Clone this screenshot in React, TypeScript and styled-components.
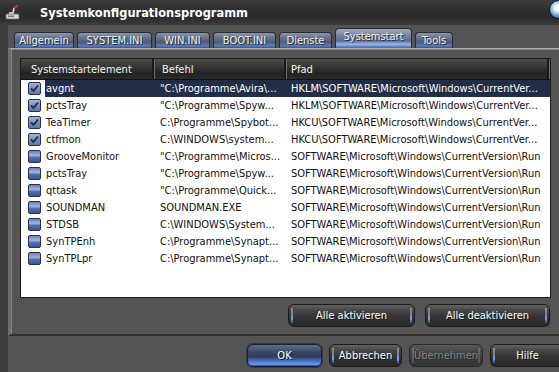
import React from "react";
import styled, { createGlobalStyle, css } from "styled-components";

const FONT = `"DejaVu Sans Condensed", "Liberation Sans", Arial, sans-serif`;

const Global = createGlobalStyle`
  html, body { margin: 0; padding: 0; background: #545454; }
  body { font-family: ${FONT}; }
`;

const Window = styled.div`
  width: 559px;
  height: 372px;
  overflow: hidden;
  background: #545454;
  display: flex;
  flex-direction: column;
  font-size: 11px;
`;

const TitleBar = styled.div`
  height: 25px;
  flex: none;
  display: flex;
  align-items: center;
  padding-left: 5px;
  background: linear-gradient(#3e3e3e, #303030 35%, #2b2b2b 70%, #3c3c3c);
`;

const TitleText = styled.div`
  flex: 1;
  margin-left: 19px;
  color: #ffffff;
  font-weight: bold;
  font-size: 12.7px;
`;

const Orb = styled.div`
  flex: none;
  width: 17px;
  height: 17px;
  margin-right: -9px;
  margin-top: -7px;
  border-radius: 50%;
  border: 1px solid #1c1c1c;
  background: radial-gradient(circle at 45% 40%, #ffffff 0 18%, #a8c8ee 40%, #4a6fa8 72%, #1d2a40);
`;

const Body = styled.div`
  flex: 1;
  display: flex;
  flex-direction: column;
  border-left: 8px solid #3c3c3c;
`;

const TabStrip = styled.div`
  height: 23px;
  flex: none;
  display: flex;
  align-items: flex-end;
  gap: 3px;
  padding-left: 6px;
`;

const Tab = styled.div<{ $active?: boolean; $w: number }>`
  width: ${(p) => p.$w}px;
  height: 16px;
  box-sizing: border-box;
  border: 1px solid #262b36;
  border-bottom: none;
  border-radius: 4px 4px 0 0;
  display: flex;
  align-items: center;
  justify-content: center;
  color: #eef0f4;
  font-size: 11px;
  text-shadow: 1px 1px 0 #2a3040;
  background: linear-gradient(#8e97a8, #69758f 30%, #4f5c7a 62%, #5a7cc0 86%, #3c5283);
  ${(p) =>
    p.$active &&
    css`
      height: 20px;
      align-items: flex-start;
      padding-top: 1px;
      background: linear-gradient(#a3abba, #77819a 35%, #5c6a8e 62%, #93b8f6 80%, #4d6597);
    `}
`;

const Panel = styled.div`
  width: 560px;
  height: 288px;
  flex: none;
  box-sizing: border-box;
  border-top: 1px solid #a9a9a9;
  border-left: 3px solid #6f6f6f;
  border-bottom: 2px solid #2f2f2f;
  box-shadow: inset 1px 1px 0 #858585;
  padding: 9px 0 0 9px;
  display: flex;
  flex-direction: column;
`;

const ListBox = styled.div`
  width: 531px;
  height: 240px;
  box-sizing: border-box;
  border: 1px solid #1b1b1b;
  background: #ffffff;
  display: flex;
  flex-direction: column;
  overflow: hidden;
`;

const Header = styled.div`
  height: 21px;
  flex: none;
  display: grid;
  grid-template-columns: 134px 132px 1fr;
  background: linear-gradient(#4c4c4c, #353535 40%, #222222 75%, #2c2c2c);
  border-bottom: 1px solid #111;
  box-sizing: border-box;
`;

const HeadCell = styled.div<{ $pad: number }>`
  display: flex;
  align-items: center;
  padding-left: ${(p) => p.$pad}px;
  color: #f4f4f4;
  font-size: 11px;
  border-right: 1px solid #6a6a6a;
  box-shadow: inset -2px 0 0 #1a1a1a;
`;

const Row = styled.div`
  height: 17px;
  flex: none;
  display: grid;
  grid-template-columns: 24px 110px 132px 1fr;
  align-items: stretch;
`;

const CheckCell = styled.div`
  display: flex;
  align-items: center;
  padding-left: 7px;
`;

const Cell = styled.div<{ $sel?: boolean; $pad: number }>`
  display: flex;
  align-items: center;
  padding-left: ${(p) => p.$pad}px;
  white-space: nowrap;
  overflow: hidden;
  color: ${(p) => (p.$sel ? "#ffffff" : "#101010")};
  background: ${(p) => (p.$sel ? "#222d46" : "transparent")};
  font-size: 11px;
`;

const Check = styled.span<{ $on: boolean }>`
  width: 13px;
  height: 13px;
  box-sizing: border-box;
  border: 1px solid #26324e;
  border-radius: 2px;
  display: flex;
  align-items: center;
  justify-content: center;
  background: ${(p) =>
    p.$on
      ? "linear-gradient(#a6b4d2, #7d8fb8 50%, #64789f)"
      : "linear-gradient(#6d82b4, #9fb4e2 40%, #5470ac 58%, #3d5690)"};
`;

const ButtonRow = styled.div`
  width: 531px;
  display: flex;
  justify-content: flex-end;
  gap: 10px;
  margin-top: 6px;
  padding-right: 1px;
  box-sizing: border-box;
`;

const sideGlow = "linear-gradient(#8e8e8e, #7a7f88 40%, #6fa2ff 72%, #3c4a66)";

const Button = styled.button<{ $w: number; $default?: boolean; $disabled?: boolean }>`
  width: ${(p) => p.$w}px;
  height: 23px;
  flex: none;
  box-sizing: border-box;
  border: 1px solid #1b1b1b;
  border-radius: 6px;
  padding: 0;
  font-family: ${FONT};
  font-size: 11px;
  color: #ffffff;
  text-shadow: 1px 1px 0 #1a1a1a;
  white-space: nowrap;
  background:
    ${sideGlow} left 2px top 3px / 2px calc(100% - 6px) no-repeat,
    ${sideGlow} right 2px top 3px / 2px calc(100% - 6px) no-repeat,
    linear-gradient(#626262, #474747 25%, #353535 55%, #2a2a2a);
  ${(p) =>
    p.$default &&
    css`
      border-color: #18203a;
      background: linear-gradient(#5f6d8a, #3a4868 35%, #2d3b5c 55%, #4f7fd8 82%, #6d9cf0 92%, #2e4068);
      box-shadow: 0 0 0 1px #3a3a3a;
    `}
  ${(p) =>
    p.$disabled &&
    css`
      color: #858585;
      text-shadow: 1px 1px 0 #2a2a2a;
      background:
        linear-gradient(#6a6a6a, #555) left 2px top 3px / 2px calc(100% - 6px) no-repeat,
        linear-gradient(#6a6a6a, #555) right 2px top 3px / 2px calc(100% - 6px) no-repeat,
        linear-gradient(#5a5a5a, #474747 30%, #3c3c3c 60%, #343434);
      border-color: #2a2a2a;
    `}
`;

const Footer = styled.div`
  flex: 1;
  display: flex;
  align-items: flex-start;
  gap: 7px;
  padding: 8px 0 0 239px;
`;

const AppIcon = () => (
  <svg width="16" height="16" viewBox="0 0 16 16">
    <rect x="1" y="9" width="13" height="5" rx="1" fill="#d8d8d8" stroke="#6a6a6a" strokeWidth="0.8" />
    <rect x="3" y="10.5" width="6" height="1.5" fill="#777" />
    <path d="M8 9 L9 3" stroke="#e6e6e6" strokeWidth="1.6" />
    <path d="M9 3 L13 0.5" stroke="#d03040" strokeWidth="2" />
    <rect x="4" y="7" width="5" height="2" fill="#bdbdbd" />
  </svg>
);

const CheckMark = () => (
  <svg width="9" height="9" viewBox="0 0 9 9">
    <path d="M1 4.5 L3.5 7 L8 1.5" fill="none" stroke="#1c2a52" strokeWidth="1.8" />
  </svg>
);

type RowData = [boolean, string, string, string];

const HK = "\\SOFTWARE\\Microsoft\\Windows\\CurrentVer...";
const RUN = "SOFTWARE\\Microsoft\\Windows\\CurrentVersion\\Run";

const rows: RowData[] = [
  [true, "avgnt", "\"C:\\Programme\\Avira\\...", "HKLM" + HK],
  [true, "pctsTray", "\"C:\\Programme\\Spyw...", "HKLM" + HK],
  [true, "TeaTimer", "C:\\Programme\\Spybot...", "HKCU" + HK],
  [true, "ctfmon", "C:\\WINDOWS\\system...", "HKCU" + HK],
  [false, "GrooveMonitor", "\"C:\\Programme\\Micros...", RUN],
  [false, "pctsTray", "\"C:\\Programme\\Spyw...", RUN],
  [false, "qttask", "\"C:\\Programme\\Quick...", RUN],
  [false, "SOUNDMAN", "SOUNDMAN.EXE", RUN],
  [false, "STDSB", "C:\\WINDOWS\\System...", RUN],
  [false, "SynTPEnh", "C:\\Programme\\Synapt...", RUN],
  [false, "SynTPLpr", "C:\\Programme\\Synapt...", RUN],
];

const tabs: [string, number][] = [
  ["Allgemein", 60],
  ["SYSTEM.INI", 75],
  ["WIN.INI", 55],
  ["BOOT.INI", 63],
  ["Dienste", 53],
  ["Systemstart", 77],
  ["Tools", 38],
];

export default function App() {
  return (
    <>
      <Global />
      <Window>
        <TitleBar>
          <AppIcon />
          <TitleText>Systemkonfigurationsprogramm</TitleText>
          <Orb />
        </TitleBar>
        <Body>
          <TabStrip>
            {tabs.map(([t, w]) => (
              <Tab key={t} $w={w} $active={t === "Systemstart"}>
                {t}
              </Tab>
            ))}
          </TabStrip>
          <Panel>
            <ListBox>
              <Header>
                <HeadCell $pad={10}>Systemstartelement</HeadCell>
                <HeadCell $pad={7}>Befehl</HeadCell>
                <HeadCell $pad={4}>Pfad</HeadCell>
              </Header>
              {rows.map(([on, name, cmd, path], i) => (
                <Row key={i}>
                  <CheckCell>
                    <Check $on={on}>{on && <CheckMark />}</Check>
                  </CheckCell>
                  <Cell $pad={1} $sel={i === 0}>{name}</Cell>
                  <Cell $pad={5} $sel={i === 0}>{cmd}</Cell>
                  <Cell $pad={4} $sel={i === 0}>{path}</Cell>
                </Row>
              ))}
            </ListBox>
            <ButtonRow>
              <Button $w={127}>Alle aktivieren</Button>
              <Button $w={125}>Alle deaktivieren</Button>
            </ButtonRow>
          </Panel>
          <Footer>
            <Button $w={75} $default>OK</Button>
            <Button $w={73}>Abbrechen</Button>
            <Button $w={74} $disabled>Übernehmen</Button>
            <Button $w={75}>Hilfe</Button>
          </Footer>
        </Body>
      </Window>
    </>
  );
}
